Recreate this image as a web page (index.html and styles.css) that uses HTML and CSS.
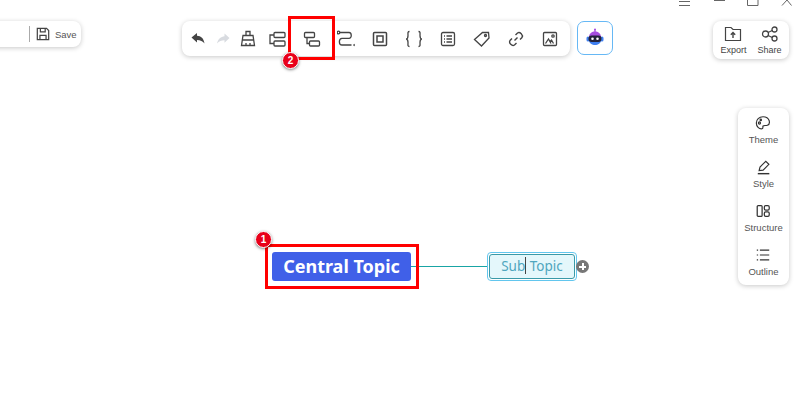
FILE: index.html
```html
<!DOCTYPE html>
<html lang="en">
<head>
<meta charset="utf-8">
<title>Mind map</title>
<link rel="stylesheet" href="styles.css">
</head>
<body>
<div class="app">
  <svg class="winctl" width="140" height="8" viewBox="0 0 140 8" fill="none" stroke="#666" stroke-width="1">
    <path d="M19 1.500H30M19 5.500H30"/>
    <path d="M54 .5H65"/>
    <path d="M87.500 0V5.500H98V0"/>
    <path d="M122 5.500L127 0L131.500 5.500"/>
  </svg>

  <div class="panel save-panel">
    <span class="divider"></span>
    <svg class="ico" width="14" height="14" viewBox="0 0 16 16" fill="none" stroke="#444" stroke-width="1.400"><path d="M1.500 1.500H12L14.500 4V14.500H1.500Z"/><path d="M5 1.500V5.500H10.500V1.500M4.500 14.500V9.500H11.500V14.500"/></svg>
    <span class="save-label">Save</span>
  </div>

  <div class="panel toolbar">
    <div class="tool-group">
      <svg class="ico" width="18" height="18" viewBox="0 0 18 18"><path d="M2.500 7.500L8 3V5.800C12 6 14.800 8.500 15.500 13.500C13.700 11.300 11.500 10 8 10V12.500Z" fill="#444"/></svg>
      <svg class="ico" width="18" height="18" viewBox="0 0 18 18"><path d="M15.500 8L10.500 3.500V6.200C7 6.500 4 9 3 13.500C5 11.300 7.500 10.300 10.500 10.300V12.800Z" fill="#d8dbe0"/></svg>
      <svg class="ico" width="18" height="18" viewBox="0 0 18 18" fill="none" stroke="#444" stroke-width="1.300"><path d="M7 1.500H11V5.500H7ZM4 5.500H14L15.500 15.500H2.500ZM3.300 10H14.700"/><path d="M7 15.500V13M11 15.500V13"/></svg>
      <svg class="ico branch" width="18" height="18" viewBox="0 0 18 18" fill="none" stroke="#444" stroke-width="1.300"><rect x="6" y="2.500" width="11" height="5" rx="1"/><rect x="6" y="11" width="11" height="5" rx="1"/><path d="M6 5H2V13.500H6"/></svg>
    </div>
    <svg class="ico" width="18" height="18" viewBox="0 0 18 18" fill="none" stroke="#444" stroke-width="1.300"><rect x="1.500" y="2.500" width="10" height="5" rx="1"/><rect x="6.500" y="11" width="10" height="5" rx="1"/><path d="M4 7.500V13.500H6.500"/></svg>
    <svg class="ico" width="18" height="18" viewBox="0 0 18 18" fill="none" stroke="#444" stroke-width="1.300"><circle cx="1.500" cy="2.500" r="1.300"/><path d="M3 2.500H12C15 2.500 15 8.300 12 8.300H5C1.500 8.300 1.500 15 5 15H14.500M16.800 14.200L17.300 15L16.800 16"/></svg>
    <svg class="ico" width="18" height="18" viewBox="0 0 18 18" fill="none" stroke="#444" stroke-width="1.500"><rect x="2.500" y="2.500" width="13" height="13" rx="1"/><rect x="6" y="6" width="6" height="6"/></svg>
    <svg class="ico" width="18" height="18" viewBox="0 0 18 18" fill="none" stroke="#444" stroke-width="1.300"><path d="M4.500 1.500C2.500 1.500 3 3 3 5.500C3 7.800 2.800 8.700 1.200 9C2.800 9.300 3 10.200 3 12.500C3 15 2.500 16.500 4.500 16.500"/><path d="M13.500 1.500C15.500 1.500 15 3 15 5.500C15 7.800 15.200 8.700 16.800 9C15.200 9.300 15 10.200 15 12.500C15 15 15.500 16.500 13.500 16.500"/></svg>
    <svg class="ico" width="18" height="18" viewBox="0 0 18 18" fill="none" stroke="#444" stroke-width="1.300"><rect x="2.500" y="2.500" width="13" height="13" rx="1.500"/><path d="M5 6H6M5 9H6M5 12H6M7.500 6H13M7.500 9H13M7.500 12H13"/></svg>
    <svg class="ico" width="18" height="18" viewBox="0 0 18 18" fill="none" stroke="#444" stroke-width="1.300"><path d="M1.500 9.500L9.500 2.500L15.500 2.300L16 8L8.500 16Z"/><circle cx="12.500" cy="5.500" r="1"/></svg>
    <svg class="ico" width="18" height="18" viewBox="0 0 18 18" fill="none" stroke="#444" stroke-width="1.400"><path d="M7.500 10.500L10.500 7.500"/><path d="M8.500 5L10.500 3C13 1.500 16.500 5 15 7.500L13 9.500"/><path d="M9.500 13L7.500 15C5 16.500 1.500 13 3 10.500L5 8.500"/></svg>
    <svg class="ico" width="18" height="18" viewBox="0 0 18 18" fill="none" stroke="#444" stroke-width="1.300"><rect x="2.500" y="2.500" width="13" height="13" rx="1"/><path d="M4.500 13.500L7.500 9L10 13.500M9 11.500L10.500 10L12.500 13.500"/><circle cx="12" cy="6" r="1.200"/></svg>
  </div>

  <div class="ai-btn">
    <svg width="20" height="20" viewBox="0 0 20 20"><path d="M10 1V4" stroke="#a64de0" stroke-width="1.200"/><circle cx="10" cy="1.500" r="1" fill="#a64de0"/><path d="M4 9C4 5.500 7 3.500 10 3.500S16 5.500 16 9Z" fill="#a64de0"/><path d="M4 12H16C16 15.500 13 17 10 17S4 15.500 4 12Z" fill="#3f7ff0"/><rect x="1.500" y="8.500" width="3" height="5" rx="1.500" fill="#3f7ff0"/><rect x="15.500" y="8.500" width="3" height="5" rx="1.500" fill="#3f7ff0"/><rect x="3.500" y="7.500" width="13" height="6.500" rx="3.200" fill="#23233a"/><circle cx="7.500" cy="10.700" r="1.300" fill="#fff"/><circle cx="12.500" cy="10.700" r="1.300" fill="#fff"/></svg>
  </div>

  <div class="panel share-panel">
    <div class="tool">
      <svg width="18" height="16" viewBox="0 0 18 16" fill="none" stroke="#444" stroke-width="1.200"><path d="M1.500 14.500V1.500H7L9 3.500H16.500V14.500Z"/><path d="M9 12V6.500M6.800 8.700L9 6.500L11.200 8.700" stroke-width="1.400"/></svg>
      <span>Export</span>
    </div>
    <div class="tool">
      <svg width="18" height="16" viewBox="0 0 18 16" fill="none" stroke="#444" stroke-width="1.300"><circle cx="4.500" cy="8" r="3"/><circle cx="13.500" cy="3.500" r="2.500"/><circle cx="13.500" cy="12.500" r="2.500"/><path d="M7 6.500L11.300 4.500M7 9.500L11.300 11.500"/></svg>
      <span>Share</span>
    </div>
  </div>

  <div class="panel side-panel">
    <div class="side-item">
      <svg width="16" height="16" viewBox="0 0 18 18" fill="none" stroke="#333" stroke-width="1.300"><path d="M9 2C4.500 2 1.500 5 1.500 9C1.500 13 4.500 16 8 15.500C9.500 15.200 8.500 13.500 9 12.500C9.700 11.300 12 12.300 14 11.500C16 10.800 16.500 8.500 16 6.500C15 3.500 12.500 2 9 2Z"/><circle cx="5" cy="9" r="1.200"/><circle cx="6.500" cy="5.500" r=".8"/></svg>
      <span>Theme</span>
    </div>
    <div class="side-item">
      <svg width="16" height="16" viewBox="0 0 18 18" fill="none" stroke="#333" stroke-width="1.300"><path d="M3.500 13L4.500 9L11 2.500L14.500 6L8 12.500Z"/><path d="M2 16.500H15" stroke-width="1.600"/></svg>
      <span>Style</span>
    </div>
    <div class="side-item">
      <svg width="16" height="16" viewBox="0 0 18 18" fill="none" stroke="#333" stroke-width="1.400"><rect x="2.500" y="3" width="5.500" height="12" rx="1"/><rect x="10.500" y="3" width="5.500" height="5" rx="1.500"/><rect x="10.500" y="10" width="5.500" height="5" rx="1.500"/></svg>
      <span>Structure</span>
    </div>
    <div class="side-item">
      <svg width="16" height="16" viewBox="0 0 18 18" fill="none" stroke="#333" stroke-width="1.300"><path d="M5.500 3.500H16M5.500 9H16M5.500 14.500H16"/><path d="M2 3.500H3.500M2 9H3.500M2 14.500H3.500"/></svg>
      <span>Outline</span>
    </div>
  </div>

  <div class="connector"></div>
  <div class="central">Central Topic</div>
  <div class="sub"><div class="sub-inner">Sub<i class="caret"></i> Topic</div></div>
  <div class="plus"></div>

  <div class="mark mark-node"></div>
  <div class="mark mark-tool"></div>
  <div class="badge badge-1">1</div>
  <div class="badge badge-2">2</div>
</div>
</body>
</html>
```
FILE: styles.css
```css
* { box-sizing: border-box; }
html, body { margin: 0; height: 100%; }
body { background: #fff; font-family: "Liberation Sans", Arial, sans-serif; overflow: hidden; }

.app { position: relative; width: 800px; height: 408px; overflow: hidden; background: #fff; }

.winctl { position: absolute; left: 660px; top: 0; }

.panel {
  position: absolute;
  background: #fff;
  border-radius: 8px;
  box-shadow: 0 1px 5px rgba(0, 0, 0, .22);
  display: flex;
  align-items: center;
}
.ico { display: block; flex: none; }

.save-panel { left: -20px; top: 21px; width: 101px; height: 26px; padding-left: 49px; }
.divider { width: 1px; height: 16px; background: #aaa; margin-right: 6px; }
.save-label { font-size: 9.500px; color: #555; margin-left: 5px; }

.toolbar { left: 182px; top: 21px; width: 388px; height: 35px; padding-left: 7px; gap: 16px; }
.tool-group { display: flex; align-items: center; gap: 7px; margin-right: 1px; }
.branch { margin-left: 4px; }

.ai-btn {
  position: absolute; left: 577px; top: 21px; width: 36px; height: 34px;
  border: 1px solid #66b8f5; border-radius: 7px; background: #fff;
  display: flex; align-items: center; justify-content: center;
}

.share-panel { left: 713px; top: 21px; width: 76px; height: 38px; justify-content: center; gap: 11px; }
.tool { display: flex; flex-direction: column; align-items: center; gap: 3px; font-size: 9px; color: #444; }

.side-panel { left: 738px; top: 108px; width: 51px; height: 177px; flex-direction: column; gap: 14px; padding-top: 7px; }
.side-item { display: flex; flex-direction: column; align-items: center; gap: 3px; font-size: 9.500px; color: #555; }

.connector { position: absolute; left: 411px; top: 265.500px; width: 78px; height: 1.500px; background: #19a5a5; }

.central {
  position: absolute; left: 272px; top: 252px; width: 139px; height: 29px; padding-bottom: 2px;
  background: #4060e8; border-radius: 3px; color: #fff;
  font-family: "Noto Sans", "Open Sans", sans-serif; font-weight: 700; font-size: 18px;
  display: flex; align-items: center; justify-content: center; white-space: nowrap;
}

.sub {
  position: absolute; left: 487px; top: 252px; width: 90px; height: 29px;
  border: 1.500px solid #62c6ee; border-radius: 4px; padding: 1px; background: #fff;
}
.sub-inner {
  height: 100%; border: 1.500px solid #3a9aa8; border-radius: 3px; background: #e4f7fb; padding-bottom: 2px;
  color: #4fa6be; font-family: "Noto Sans", "Open Sans", sans-serif; font-size: 13.500px;
  display: flex; align-items: center; justify-content: center; white-space: pre;
}
.caret { width: 1px; height: 17px; background: #444; }

.plus {
  position: absolute; left: 576px; top: 260px; width: 13px; height: 13px; border-radius: 50%;
  background: linear-gradient(#fff, #fff) center / 7px 2px no-repeat,
              linear-gradient(#fff, #fff) center / 2px 7px no-repeat,
              #777;
}

.mark { position: absolute; border: 3px solid #f00; }
.mark-node { left: 265px; top: 244px; width: 154px; height: 45px; }
.mark-tool { left: 288px; top: 16px; width: 47px; height: 44px; }

.badge {
  position: absolute; width: 17px; height: 17px; border-radius: 50%;
  background: #e8001a; border: 1.500px solid #fff; box-shadow: 0 1px 3px rgba(0, 0, 0, .5);
  color: #fff; font-size: 10px; font-weight: 700;
  display: flex; align-items: center; justify-content: center;
}
.badge-1 { left: 255px; top: 231px; }
.badge-2 { left: 282px; top: 52px; }
```
